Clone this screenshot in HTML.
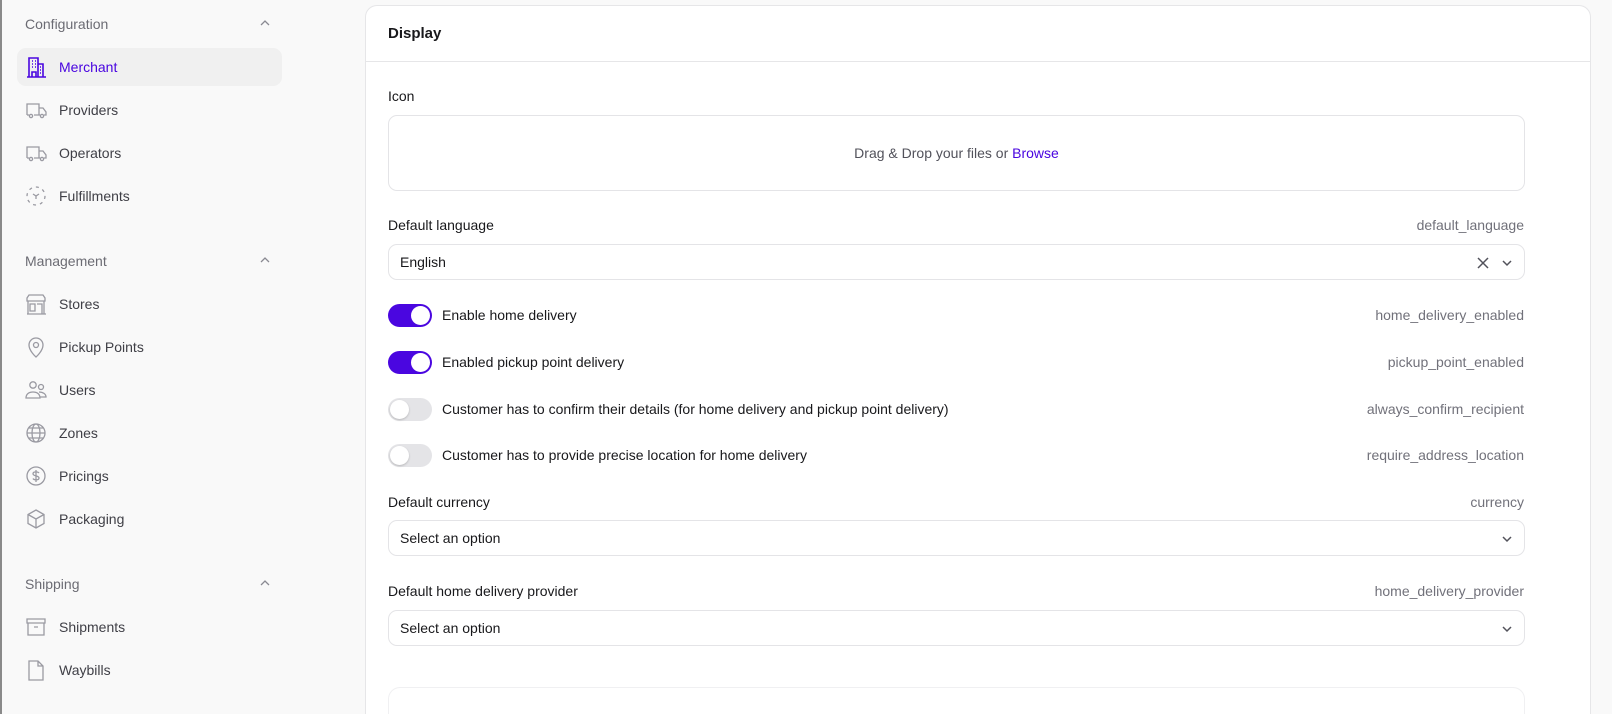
<!DOCTYPE html>
<html style="width:1612px;height:714px;overflow:hidden"><head><meta charset="utf-8">
<style>
*{box-sizing:border-box;margin:0;padding:0}
body{width:1612px;height:714px;overflow:hidden;background:#f9f9f9;font-family:"Liberation Sans",sans-serif;font-size:14px;color:#18181b;position:relative}
.lb{position:absolute;left:0;top:0;width:2px;height:714px;background:#8a8a8a}
.sh{position:absolute;left:25px;color:#6b6b73;font-size:14px}
.chev{position:absolute;left:258px}
.it{position:absolute;left:17px;width:265px;height:38px;border-radius:9px;display:flex;align-items:center;padding-left:8px;color:#3f3f46;font-size:14px}
.it svg{width:22px;height:22px;margin-right:12px;flex:none}
.it.act{background:#f0f0f0;color:#4a06e0}
.card{position:absolute;left:365px;top:5px;width:1226px;height:709px;overflow:hidden;background:#fff;border:1px solid #e6e6e8;border-bottom:none;border-radius:12px 12px 0 0}
.hd{height:56px;border-bottom:1px solid #e6e6e8;padding:0 22px;display:flex;align-items:center;font-weight:bold;font-size:15px}
.a{position:absolute}
.lbl{position:absolute;left:22px;font-size:14px;color:#18181b}
.key{position:absolute;right:66px;color:#71717a;font-size:14px}
.box{position:absolute;left:22px;width:1137px;border:1px solid #e4e4e7;border-radius:9px;background:#fff}
.sel{height:36px;display:flex;align-items:center;padding-left:11px;font-size:14px}
.tg{position:absolute;left:22px;width:44px;height:23px;border-radius:12px;background:#4a06e0}
.tg::after{content:"";position:absolute;top:2px;left:23px;width:19px;height:19px;border-radius:50%;background:#fff}
.tg.off{background:#e4e4e7}
.tg.off::after{left:2px;box-shadow:0 1px 2px rgba(0,0,0,.2)}
.tl{position:absolute;left:76px;font-size:14px}
</style></head><body>
<div class="lb"></div>
<div class="sh" style="top:16px">Configuration</div>
<svg class="chev" style="top:16px" width="14" height="14" viewBox="0 0 14 14"><path d="M3 9l4-4 4 4" fill="none" stroke="#8a8a92" stroke-width="1.3"/></svg>
<div class="it act" style="top:48px"><svg viewBox="0 0 22 22" fill="none" stroke="#4a06e0" stroke-width="1.6"><path d="M2 21h19M4 21V2h9v19M13 8h5v13M7 5h1M10 5h1M7 8h1M10 8h1M7 11h1M10 11h1M15 11h1M15 14h1M15 17h1M7 21v-5h4v5"/></svg>Merchant</div>
<div class="it" style="top:91px"><svg viewBox="0 0 22 22" fill="none" stroke="#9a9aa2" stroke-width="1.3"><path d="M2 16V5h12v11M14 9h4l3 4v3h-2M2 16h2M9 16h6"/><circle cx="6" cy="17" r="1.6"/><circle cx="17" cy="17" r="1.6"/></svg>Providers</div>
<div class="it" style="top:134px"><svg viewBox="0 0 22 22" fill="none" stroke="#9a9aa2" stroke-width="1.3"><path d="M2 16V5h12v11M14 9h4l3 4v3h-2M2 16h2M9 16h6"/><circle cx="6" cy="17" r="1.6"/><circle cx="17" cy="17" r="1.6"/></svg>Operators</div>
<div class="it" style="top:177px"><svg viewBox="0 0 22 22" fill="none" stroke="#9a9aa2" stroke-width="1.3" stroke-dasharray="3 4"><circle cx="11" cy="11" r="9"/><path d="M8 9l3 2 3-2M11 11v3" stroke-dasharray="none"/></svg>Fulfillments</div>
<div class="sh" style="top:253px">Management</div>
<svg class="chev" style="top:253px" width="14" height="14" viewBox="0 0 14 14"><path d="M3 9l4-4 4 4" fill="none" stroke="#8a8a92" stroke-width="1.3"/></svg>
<div class="it" style="top:285px"><svg viewBox="0 0 22 22" fill="none" stroke="#9a9aa2" stroke-width="1.3"><path d="M2 21h19M3 8V21M19 8v13M2 5l2-3h14l2 3v3H2zM5 11h5v7H5zM12 11h5v10"/></svg>Stores</div>
<div class="it" style="top:328px"><svg viewBox="0 0 22 22" fill="none" stroke="#9a9aa2" stroke-width="1.3"><path d="M11 21s-7-6-7-12a7 7 0 0114 0c0 6-7 12-7 12z"/><circle cx="11" cy="9" r="2.5"/></svg>Pickup Points</div>
<div class="it" style="top:371px"><svg viewBox="0 0 22 22" fill="none" stroke="#9a9aa2" stroke-width="1.3"><circle cx="8" cy="6" r="3.2"/><circle cx="16" cy="8" r="2.5"/><path d="M1 19c0-4 3-6 7-6s7 2 7 6zM14 13c4 0 7 2 7 5h-6"/></svg>Users</div>
<div class="it" style="top:414px"><svg viewBox="0 0 22 22" fill="none" stroke="#9a9aa2" stroke-width="1.3"><circle cx="11" cy="11" r="9"/><ellipse cx="11" cy="11" rx="4" ry="9"/><path d="M2 11h18M4 6h14M4 16h14"/></svg>Zones</div>
<div class="it" style="top:457px"><svg viewBox="0 0 22 22" fill="none" stroke="#9a9aa2" stroke-width="1.3"><circle cx="11" cy="11" r="9"/><path d="M14 8c-1-1.5-6-1.8-6 .7 0 2.8 6 1.5 6 4.3 0 2.5-5 2.2-6 .5M11 5v12"/></svg>Pricings</div>
<div class="it" style="top:500px"><svg viewBox="0 0 22 22" fill="none" stroke="#9a9aa2" stroke-width="1.3"><path d="M11 2l8 4.5v9L11 20l-8-4.5v-9zM3 6.5l8 4.5 8-4.5M11 11v9"/></svg>Packaging</div>
<div class="sh" style="top:576px">Shipping</div>
<svg class="chev" style="top:576px" width="14" height="14" viewBox="0 0 14 14"><path d="M3 9l4-4 4 4" fill="none" stroke="#8a8a92" stroke-width="1.3"/></svg>
<div class="it" style="top:608px"><svg viewBox="0 0 22 22" fill="none" stroke="#9a9aa2" stroke-width="1.3"><path d="M2 3h18v4H2zM3 7v12h16V7M9 11h4"/></svg>Shipments</div>
<div class="it" style="top:651px"><svg viewBox="0 0 22 22" fill="none" stroke="#9a9aa2" stroke-width="1.3"><path d="M4 2h9l5 5v14H4zM13 2v5h5"/></svg>Waybills</div>

<div class="card">
<div class="hd">Display</div>
<div class="lbl" style="top:82px">Icon</div>
<div class="box" style="top:109px;height:76px;display:flex;align-items:center;justify-content:center;color:#52525b">Drag &amp; Drop your files or&nbsp;<span style="color:#4a06e0">Browse</span></div>
<div class="lbl" style="top:211px">Default language</div>
<div class="key" style="top:211px">default_language</div>
<div class="box sel" style="top:238px">English
<svg class="a" style="right:34px;top:11px" width="14" height="14" viewBox="0 0 14 14"><path d="M2 2l10 10M12 2L2 12" stroke="#52525b" stroke-width="1.5"/></svg>
<svg class="a" style="right:10px;top:11px" width="14" height="14" viewBox="0 0 14 14"><path d="M3 5l4 4 4-4" fill="none" stroke="#52525b" stroke-width="1.5"/></svg></div>
<div class="tg" style="top:298px"></div><div class="tl" style="top:301px">Enable home delivery</div><div class="key" style="top:301px">home_delivery_enabled</div>
<div class="tg" style="top:345px"></div><div class="tl" style="top:348px">Enabled pickup point delivery</div><div class="key" style="top:348px">pickup_point_enabled</div>
<div class="tg off" style="top:392px"></div><div class="tl" style="top:395px">Customer has to confirm their details (for home delivery and pickup point delivery)</div><div class="key" style="top:395px">always_confirm_recipient</div>
<div class="tg off" style="top:438px"></div><div class="tl" style="top:441px">Customer has to provide precise location for home delivery</div><div class="key" style="top:441px">require_address_location</div>
<div class="lbl" style="top:488px">Default currency</div>
<div class="key" style="top:488px">currency</div>
<div class="box sel" style="top:514px">Select an option
<svg class="a" style="right:10px;top:11px" width="14" height="14" viewBox="0 0 14 14"><path d="M3 5l4 4 4-4" fill="none" stroke="#52525b" stroke-width="1.5"/></svg></div>
<div class="lbl" style="top:577px">Default home delivery provider</div>
<div class="key" style="top:577px">home_delivery_provider</div>
<div class="box sel" style="top:604px">Select an option
<svg class="a" style="right:10px;top:11px" width="14" height="14" viewBox="0 0 14 14"><path d="M3 5l4 4 4-4" fill="none" stroke="#52525b" stroke-width="1.5"/></svg></div>
<div class="box" style="top:681px;height:28px;border-color:#f0f0f2;border-bottom:none;border-radius:12px 12px 0 0"></div>
</div>
</body></html>
